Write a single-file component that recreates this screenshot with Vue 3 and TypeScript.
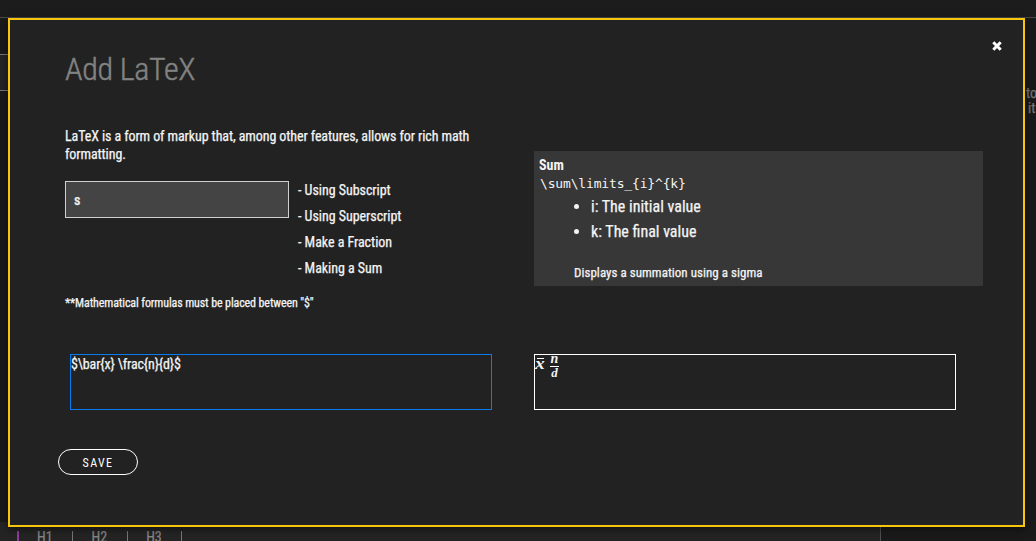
<script setup lang="ts">
import { ref } from 'vue'

const search = ref('s')
const source = ref('$\\bar{x} \\frac{n}{d}$')
const guides: string[] = ['Using Subscript', 'Using Superscript', 'Make a Fraction', 'Making a Sum']
const params: string[] = ['i: The initial value', 'k: The final value']
const headings: string[] = ['H1', 'H2', 'H3']
</script>

<template>
  <div class="page">
    <div class="topbar"></div>
    <div class="workspace">
      <div class="strip"></div>
      <div class="hint"><span>to</span><span>it</span></div>
    </div>
    <div class="toolbar">
      <i class="mark"></i>
      <template v-for="h in headings" :key="h"><span>{{ h }}</span><i :class="{ end: h === 'H3' }"></i></template>
    </div>

    <section class="modal">
      <button class="close" aria-label="Close">
        <svg width="10" height="10" viewBox="0 0 10 10"><path d="M1.3 1.3 8.7 8.7M8.7 1.3 1.3 8.7" /></svg>
      </button>
      <h1><span>Add LaTeX</span></h1>
      <div class="columns">
        <div class="left">
          <p class="intro"><span>LaTeX is a form of markup that, among other features, allows for rich math</span><br><span>formatting.</span></p>
          <div class="lookup">
            <input v-model="search" class="search">
            <ul class="guides">
              <li v-for="g in guides" :key="g"><span>- {{ g }}</span></li>
            </ul>
          </div>
          <p class="note"><span>**Mathematical formulas must be placed between "$"</span></p>
        </div>
        <div class="card">
          <strong>Sum</strong>
          <code>\sum\limits_{i}^{k}</code>
          <ul>
            <li v-for="p in params" :key="p"><span>{{ p }}</span></li>
          </ul>
          <p><span>Displays a summation using a sigma</span></p>
        </div>
      </div>
      <div class="editors">
        <div class="source" contenteditable="true" spellcheck="false"><span>{{ source }}</span></div>
        <div class="preview">
          <span class="bar"><span>x</span></span>
          <span class="frac"><span>n</span><span>d</span></span>
        </div>
      </div>
      <button class="save">SAVE</button>
    </section>
  </div>
</template>

<style>
body { background: #1b1b1b; overflow: hidden; }
</style>

<style scoped>
* { box-sizing: border-box; }
.page { position: relative; width: 1036px; height: 541px; overflow: hidden; background: #1a1a1a; color: #f4f4f4; font-family: "Roboto Condensed", Roboto, sans-serif; font-stretch: 75%; font-size: 14px; font-weight: 400; -webkit-text-stroke: .25px; display: flex; flex-direction: column; }
p, h1, ul { margin: 0; padding: 0; }
.topbar { height: 18px; background: #1c1c1c; border-bottom: 1px solid #4a4a4a; flex: none; }
.workspace { height: 504px; flex: none; display: flex; justify-content: space-between; padding-top: 36px; }
.strip { width: 12px; height: 37px; background: #242424; border: solid #777; border-width: 1px 0; }
.hint { width: 10px; padding-top: 32px; color: #777; line-height: 15px; display: flex; flex-direction: column; }
.hint span:last-child { padding-left: 2px; }
.toolbar { width: 881px; height: 19px; background: #242424; border-right: 1px solid #4d5050; color: #858585; display: flex; align-items: flex-start; padding: 6px 0 0 17px; line-height: 18px; }
.toolbar span { width: 16px; margin: 0 19px 0 18px; flex: none; }
.toolbar i { width: 1px; height: 12px; margin: 3px .6px 0 0; background: #777; }
.toolbar .mark { width: 2px; margin-right: 0; background: #8d3d9b; }
.toolbar .end { background: #3890a8; }
.modal { position: absolute; left: 8px; top: 18px; width: 1017px; height: 509px; border: 2px solid #f5c60d; background: #222; box-shadow: 0 2px 8px rgba(0, 0, 0, .5); padding: 29px 0 0 48px; }
button { font: inherit; font-stretch: 75%; color: #fff; background: none; padding: 0; }
.close { position: absolute; right: 21px; top: 21px; width: 10px; height: 10px; border: 0; }
.close svg { display: block; }
.close path { stroke: #fff; stroke-width: 3; }
h1 { margin-left: 7px; height: 74px; font-size: 32px; line-height: 40px; font-weight: 300; letter-spacing: -.3px; -webkit-text-stroke: .45px; color: #828282; white-space: nowrap; }
.columns { display: flex; height: 231px; padding-left: 7px; }
.left { width: 469px; padding-top: 4px; }
.intro { line-height: 18px; height: 54px; white-space: nowrap; letter-spacing: -.095px; }
.lookup { display: flex; height: 114px; }
.search { width: 224px; height: 37px; border: 1px solid #d0d0d0; background: #444; color: #eee; font: inherit; font-stretch: 75%; font-weight: 500; padding: 0 8px; border-radius: 0; outline: 0; }
.guides { list-style: none; margin-left: 9px; line-height: 26px; margin-top: -4px; white-space: nowrap; letter-spacing: -.04px; }
.note { font-size: 12px; line-height: 16px; white-space: nowrap; letter-spacing: -.12px; }
.card { width: 449px; height: 135px; margin-top: 28px; background: #373737; padding: 5px; display: flex; flex-direction: column; }
.card strong { line-height: 18px; -webkit-text-stroke: 0; }
.card code { font: 13px/20px "DejaVu Sans Mono", monospace; letter-spacing: -.16px; padding-left: 1px; height: 19px; -webkit-text-stroke: 0; }
.card ul { padding-left: 52px; margin-top: 1px; font-size: 16px; line-height: 25px; }
.card p { margin: 20px 0 0 35px; font-size: 13px; line-height: 18px; letter-spacing: .03px; }
.editors { display: flex; gap: 42px; margin: 0 0 39px 12px; }
.editors > div { width: 422px; height: 56px; border: 1px solid #fff; }
.editors .source { border-color: #087cec; line-height: 18px; outline: 0; letter-spacing: -.13px; }
.preview { display: flex; font: italic bold 17px/13px "Liberation Serif", serif; -webkit-text-stroke: 0; }
.bar { margin: 3px 0 0 2px; height: 11px; line-height: 10px; border-top: 1px solid #fff; width: 7px; }
.bar span { display: block; margin-left: -2px; transform: scaleX(1.15); transform-origin: left; }
.frac { margin: -3px 0 0 6px; width: 9px; text-align: center; }
.frac span { display: block; line-height: 14px; height: 14px; font-size: 14px; }
.frac span + span { border-top: 1px solid #fff; height: 15px; line-height: 12px; font-size: 13px; }
.save { width: 80px; height: 26px; border: 1px solid #fff; border-radius: 13px; font-size: 12px; letter-spacing: 1.4px; padding-top: 1px; -webkit-text-stroke: 0; }
</style>
